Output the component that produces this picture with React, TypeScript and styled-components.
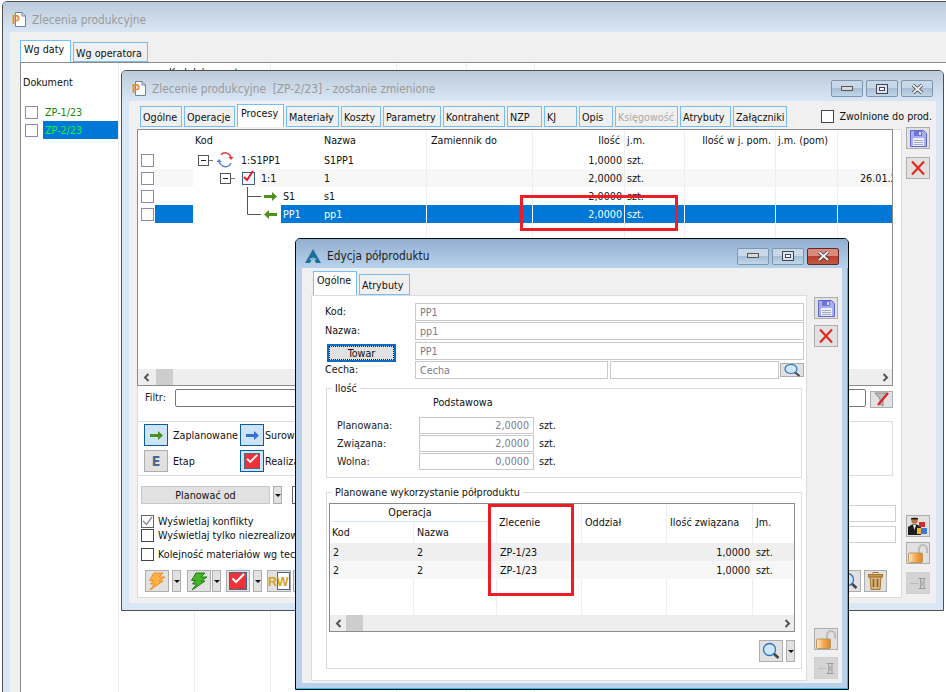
import React from "react";
import styled, { createGlobalStyle } from "styled-components";

const Global = createGlobalStyle`
  html, body { margin: 0; padding: 0; background: #fff; }
  #root { width: 946px; height: 692px; position: relative; overflow: hidden; background: #fff; }
  * { box-sizing: border-box; }
  body { font-family: "DejaVu Sans Condensed", "DejaVu Sans", sans-serif; font-size: 10.7px; color: #111; }
`;

const Desk = styled.div`position: relative; width: 946px; height: 692px; overflow: hidden;`;

const Win = styled.div<{ $x: number; $y: number; $w: number; $h: number; $active?: boolean }>`
  position: absolute;
  left: ${p => p.$x}px; top: ${p => p.$y}px; width: ${p => p.$w}px; height: ${p => p.$h}px;
  border: 1px solid ${p => (p.$active ? "#0a0a0a" : "#505050")};
  border-radius: 5px 5px 0 0;
  background: ${p => (p.$active ? "#b8d2ec" : "#d9e6f4")};
  display: flex; flex-direction: column;
  ${p => (p.$active ? "box-shadow: inset -1px -1px 0 #1cc4ec;" : "")}
`;
const TitleBar = styled.div<{ $h: number; $active?: boolean; $pad: number }>`
  height: ${p => p.$h}px; flex: none;
  display: flex; align-items: center; padding: 5px ${p => p.$pad}px 0 ${p => p.$pad}px;
  background: linear-gradient(${p => (p.$active ? "#93afd0, #b8d2ec" : "#bccbdb, #d9e6f4")});
  border-radius: 4px 4px 0 0;
`;
const TitleText = styled.span<{ $active?: boolean }>`
  font-size: 11.8px; margin-left: 6px; white-space: pre;
  color: ${p => (p.$active ? "#1c1c1c" : "#9a9a9a")};
`;
const Caption = styled.div`margin-left: auto; display: flex; gap: 3px;`;
const CapBtn = styled.div<{ $close?: boolean; $active?: boolean }>`
  width: 32px; height: 17px; border: 1px solid ${p => (p.$close ? "#5e2a2a" : "#7f97ae")}; border-radius: 2px;
  display: flex; align-items: center; justify-content: center;
  background: ${p => p.$close
    ? "linear-gradient(#d98a78 0 45%, #b9402a 50%, #c25a44)"
    : "linear-gradient(#c8d8e8 0 45%, #a6bfd8 50%, #c3d6e8)"};
`;
const Client = styled.div<{ $m: number }>`
  flex: 1; background: #f0f0f0; margin: 0 ${p => p.$m}px ${p => p.$m}px; min-height: 0;
  display: flex; flex-direction: column;
`;
const Tabs = styled.div<{ $left: number; $top: number; $h: number }>`
  display: flex; align-items: flex-end; gap: 2px; flex: none;
  padding: ${p => p.$top}px 4px 0 ${p => p.$left}px; height: ${p => p.$h + p.$top}px;
`;
const Tab = styled.div<{ $w: number; $active?: boolean; $off?: boolean; $h: number }>`
  width: ${p => p.$w}px; height: ${p => p.$h}px; flex: none;
  border: 1px solid #73bdfa; ${p => (p.$active ? "border-bottom: none;" : "")}
  background: ${p => (p.$active ? "#fff" : "#f0f0f0")};
  color: ${p => (p.$off ? "#a9a9a9" : "#111")};
  padding: ${p => (p.$active ? "2px 0 0 3px" : "4px 0 0 2px")}; white-space: nowrap; overflow: hidden;
  font-size: 10.7px;
`;
const ReleaseCheck = styled.label`
  margin-left: auto; display: flex; align-items: center; gap: 5px; height: 21px; font-size: 10.7px;
`;
const BigBox = styled.span<{ $tone?: string; $size?: number }>`
  width: ${p => p.$size ?? 13}px; height: ${p => p.$size ?? 13}px; flex: none; background: #fff;
  border: 1px solid ${p => p.$tone ?? "#444"}; display: inline-flex; align-items: center; justify-content: center;
`;

/* background window */
const BgPanel = styled.div`
  flex: 1; margin-left: 10px; border-left: 1px solid #8c8c8c; border-top: 1px solid #8c8c8c;
  background: #fff; display: flex; min-height: 0;
`;
const BgCol = styled.div<{ $w: number }>`
  width: ${p => p.$w}px; flex: none; border-right: 1px solid #ececec; white-space: nowrap;
`;
const BgHead = styled.div`padding: 13px 0 0 2px; height: 40px; font-size: 10.7px;`;
const BgClippedHead = styled.div`padding: 3px 0 0 50px; font-size: 10.7px;`;
const BgRow = styled.div`height: 18px; display: flex; align-items: center;`;
const BgDoc = styled.div<{ $sel?: boolean }>`
  flex: 1; height: 18px; margin-left: 5px; padding: 3px 0 0 2px; font-size: 10.7px;
  background: ${p => (p.$sel ? "#0078d7" : "transparent")};
  color: ${p => (p.$sel ? "#0cf53e" : "#0a8a0a")};
`;
const RowBox = styled.span<{ $ml?: number }>`
  width: 13px; height: 13px; flex: none; margin-left: ${p => p.$ml ?? 4}px; background: #fff; border: 1px solid #9088b2;
`;

/* production order window */
const Body = styled.div`display: flex; flex: 1; min-height: 0;`;
const Panel = styled.div<{ $w: number; $h: number; $top: number; $left: number }>`
  width: ${p => p.$w}px; height: ${p => p.$h}px; margin: ${p => p.$top}px 0 0 ${p => p.$left}px;
  background: #fff; border: 1px solid #dcdcdc; flex: none; display: flex; flex-direction: column;
`;
const Side = styled.div<{ $left: number; $top: number; $h: number }>`
  width: 24px; flex: none; margin: ${p => p.$top}px 0 0 ${p => p.$left}px; height: ${p => p.$h}px;
  display: flex; flex-direction: column; gap: 8px;
`;
const ToolBtn = styled.div<{ $push?: boolean; $gap?: number; $off?: boolean; $w?: number; $h?: number }>`
  width: ${p => p.$w ?? 24}px; height: ${p => p.$h ?? 22}px; flex: none;
  background: ${p => (p.$off ? "#d4d4d4" : "#e1e1e1")}; border: 1px solid ${p => (p.$off ? "#d0d0d0" : "#adadad")};
  display: flex; align-items: center; justify-content: center;
  ${p => (p.$push ? "margin-top: auto;" : "")}
  ${p => (p.$gap !== undefined ? `margin-top: ${p.$gap - 8}px;` : "")}
`;
const DropBtn = styled.div<{ $h?: number }>`
  width: 9px; height: ${p => p.$h ?? 22}px; flex: none; background: #e1e1e1; border: 1px solid #adadad;
  display: flex; align-items: center; justify-content: center;
  &::after { content: ""; border: 3px solid transparent; border-top: 3px solid #111; border-bottom: 0; }
`;

const GridWrap = styled.div`
  margin: -1px 0 0 -1px; width: 756px; height: 257px; flex: none; border: 1px solid #8c8c8c;
  display: flex; flex-direction: column; background: #fff;
`;
const COLS = "17px 38px 128px 106px 106px 92px 60px 91px 62px 1fr";
const GridHead = styled.div`
  display: grid; grid-template-columns: ${COLS}; height: 21px; flex: none;
`;
const HeadCell = styled.div<{ $right?: boolean; $line?: boolean; $pl?: number }>`
  padding: 4px 4px 0 ${p => p.$pl ?? 2}px; white-space: nowrap; overflow: hidden; font-size: 10.7px;
  text-align: ${p => (p.$right ? "right" : "left")};
  ${p => (p.$line ? "border-right: 1px solid #eee;" : "")}
`;
const GridRow = styled.div<{ $fill?: boolean }>`
  display: grid; grid-template-columns: ${COLS}; height: ${p => (p.$fill ? "auto" : "18px")};
  flex: ${p => (p.$fill ? "1" : "none")}; min-height: 0;
`;
type Tone = "" | "alt" | "sel";
const toneBg = (t?: Tone) => (t === "sel" ? "#0078d7" : t === "alt" ? "#f7f7f7" : "transparent");
const Cell = styled.div<{ $tone?: Tone; $right?: boolean; $line?: boolean; $pl?: number }>`
  background: ${p => toneBg(p.$tone)}; color: ${p => (p.$tone === "sel" ? "#fff" : "#111")};
  ${p => (p.$line ? `border-right: 1px solid ${p.$tone === "sel" ? "#fff" : "#eee"};` : "")}
  text-align: ${p => (p.$right ? "right" : "left")};
  padding: 3px ${p => (p.$right ? "2px" : "0")} 0 ${p => p.$pl ?? 2}px;
  white-space: nowrap; overflow: hidden; font-size: 10.7px;
`;
const CheckCell = styled.div`display: flex; align-items: center; padding-left: 3px;`;
const TreeCell = styled.div`display: flex; height: 18px;`;
const TreeLabel = styled.div<{ $tone?: Tone }>`
  flex: 1; background: ${p => toneBg(p.$tone)}; color: ${p => (p.$tone === "sel" ? "#fff" : "#111")};
  padding: 3px 0 0 2px; font-size: 10.7px; white-space: nowrap;
`;
const HScroll = styled.div`
  height: 16px; flex: none; background: #eee; display: flex; align-items: center; padding: 0 3px 0 5px;
`;
const Thumb = styled.div<{ $at: number }>`
  width: 17px; height: 100%; background: #cdcdcd; margin-left: ${p => p.$at}px;
`;
const Spring = styled.div`flex: 1;`;

const FilterRow = styled.div`
  display: flex; height: 19px; margin-top: 3px; width: 755px; flex: none; align-items: flex-start;
`;
const FilterLabel = styled.div`width: 37px; padding: 2px 0 0 7px; font-size: 10.7px; color: #222;`;
const FilterInput = styled.div`width: 691px; height: 18px; background: #fff; border: 1px solid #777; border-radius: 2px;`;
const FilterBtn = styled(ToolBtn)`margin: 2px 0 0 4px; height: 17px; width: 23px;`;
const LegendBox = styled.div`
  margin: 13px 0 0 -1px; width: 756px; height: 55px; flex: none; border: 1px solid #dcdcdc;
  display: grid; grid-template-columns: 96px 1fr; grid-auto-rows: 22px; row-gap: 4px;
  padding: 2px 0 0 6px;
`;
const LegendItem = styled.div`display: flex; align-items: center; white-space: nowrap; overflow: hidden; font-size: 10.7px;`;
const LegendKey = styled.div<{ $on?: boolean; $ml?: number }>`
  width: 24px; height: 22px; flex: none; margin-right: ${p => p.$ml ?? 5}px;
  background: ${p => (p.$on ? "#cce4f7" : "#e1e1e1")}; border: 1px solid ${p => (p.$on ? "#0a5a9c" : "#adadad")};
  display: flex; align-items: center; justify-content: center;
`;
const EGlyph = styled.span`font-weight: 700; font-size: 14px; color: #47688f;`;
const PlanRow = styled.div`display: flex; margin: 10px 0 0 3px; gap: 3px; height: 18px; flex: none;`;
const PlanBtn = styled.div`
  width: 129px; background: #e1e1e1; border: 1px solid #c8c8c8; text-align: center; padding-top: 2px; font-size: 10.7px;
`;
const PlanBox = styled.div`width: 20px; margin-left: 7px; border: 1px solid #666; background: #fff;`;
const MidBlock = styled.div`display: flex; height: 66px; flex: none; justify-content: space-between;`;
const Checks = styled.div`padding: 10px 0 0 3px; display: flex; flex-direction: column;`;
const CheckLine = styled.div<{ $mt?: number }>`
  display: flex; align-items: center; gap: 4px; height: 14px; white-space: nowrap; font-size: 10.7px;
  margin-top: ${p => p.$mt ?? 0}px;
`;
const RightInputs = styled.div`
  width: 90px; padding: 1px 5px 0 0; display: flex; flex-direction: column; gap: 4px;
`;
const RightInput = styled.div`height: 17px; border: 1px solid #cfcfcf; background: #fff;`;
const ActionRow = styled.div`display: flex; padding: 0 7px 0 7px; height: 23px; flex: none; width: 756px;`;
const BtnPair = styled.div<{ $gap?: number; $next?: number }>`
  display: flex; gap: ${p => p.$gap ?? 3}px; margin-right: ${p => p.$next ?? 6}px;
`;
const PushRight = styled.div`margin-left: auto; display: flex; gap: 3px;`;

/* half-product window */
const EditPanel = styled(Panel)`display: block;`;
const FormRow = styled.div<{ $mt?: number; $pl?: number }>`
  display: flex; height: 18px; padding-left: ${p => p.$pl ?? 13}px; margin-top: ${p => p.$mt ?? 0}px; align-items: center;
`;
const FormLabel = styled.div`width: 90px; flex: none; padding-bottom: 2px; font-size: 10.7px;`;
const Field = styled.div<{ $w?: number; $right?: boolean; $ml?: number }>`
  ${p => (p.$w ? `width: ${p.$w}px; flex: none;` : "flex: 1;")}
  height: 18px; background: #fff; border: 1px solid #c8c8c8; color: #7c7c8a; font-size: 10.7px;
  padding: 2px ${p => (p.$right ? "4px" : "0")} 0 4px; text-align: ${p => (p.$right ? "right" : "left")};
  white-space: nowrap; overflow: hidden; margin-left: ${p => p.$ml ?? 0}px;
`;
const FormFields = styled.div`padding: 7px 2px 0 0;`;
const TowarBtn = styled.button`
  width: 69px; height: 18px; margin: 4px 19px 0 0; padding: 0; flex: none; font: inherit; font-size: 10.7px; color: #111;
  background: #e1e1e1; border: 2px solid #0a6cc4; outline: 1px dotted #222; outline-offset: -3px;
`;
const SearchBtn = styled(ToolBtn)`width: 24px; height: 14px; margin-left: 1px;`;
const Group = styled.div<{ $mt: number; $h: number }>`
  position: relative; margin: ${p => p.$mt}px 4px 0 14px; height: ${p => p.$h}px; border: 1px solid #dcdcdc;
`;
const GroupTitle = styled.span`
  position: absolute; left: 5px; top: -7px; padding: 0 3px; background: #fff; font-size: 10.7px; line-height: 14px; white-space: nowrap;
`;
const QtyHead = styled.div`padding: 7px 0 0 106px; height: 28px; font-size: 10.7px;`;
const QtyRow = styled.div`display: flex; align-items: center; height: 17px; margin-bottom: 1px; padding-left: 10px; font-size: 10.7px;`;
const QtyLabel = styled.div`width: 82px; flex: none; color: #222;`;
const QtyField = styled(Field)`height: 17px; padding-top: 1px;`;
const Unit = styled.div`margin-left: 5px;`;

const PlanTable = styled.div`
  margin: 10px 0 0 2px; width: 466px; height: 129px; border: 1px solid #8c8c8c; display: flex; flex-direction: column;
`;
const PCOLS = "84px 83px 85px 85px 86px 1fr";
const PHead = styled.div`
  display: grid; grid-template-columns: ${PCOLS}; grid-template-rows: 18px 21px; height: 39px; flex: none;
`;
const PGroupHead = styled.div`
  grid-column: 1 / span 2; grid-row: 1; text-align: center; border-bottom: 1px solid #d5e7f6; margin: 0 8px 0 1px; padding-top: 2px; font-size: 10.7px;
`;
const PHeadCell = styled.div<{ $tall?: boolean; $line?: boolean; $pl?: number; $col: number }>`
  grid-column: ${p => p.$col};
  ${p => (p.$tall ? "grid-row: 1 / span 2; padding-top: 12px;" : "grid-row: 2; padding-top: 4px;")}
  padding-left: ${p => p.$pl ?? 2}px; font-size: 10.7px; white-space: nowrap; overflow: hidden;
  ${p => (p.$line ? "border-right: 1px solid #eee;" : "")}
`;
const PRow = styled.div<{ $bg?: string; $fill?: boolean }>`
  display: grid; grid-template-columns: ${PCOLS}; height: ${p => (p.$fill ? "auto" : "18px")};
  flex: ${p => (p.$fill ? "1" : "none")}; min-height: 0; background: ${p => p.$bg ?? "transparent"};
`;
const PCell = styled.div<{ $right?: boolean; $line?: boolean; $pl?: number }>`
  padding: 3px ${p => (p.$right ? "3px" : "0")} 0 ${p => p.$pl ?? 3}px; font-size: 10.7px;
  text-align: ${p => (p.$right ? "right" : "left")};
  ${p => (p.$line ? "border-right: 1px solid #eee;" : "")}
`;
const PToolbar = styled.div`
  display: flex; justify-content: flex-end; gap: 3px; width: 466px; margin: 8px 0 0 2px;
`;
const RedFrame = styled.div<{ $x: number; $y: number; $w: number; $h: number }>`
  position: absolute; left: ${p => p.$x}px; top: ${p => p.$y}px; width: ${p => p.$w}px; height: ${p => p.$h}px;
  border: 3px solid #ee1c25; pointer-events: none;
`;

/* icons */
const DocP = () => (
  <svg width="14" height="15" viewBox="0 0 14 15">
    <path d="M3.5.5H10l3.5 3.5v10.5h-10z" fill="#fff" stroke="#6f8299" />
    <path d="M10 .5V4h3.5" fill="none" stroke="#6f8299" />
    <text x="0" y="12" fontFamily="Liberation Sans" fontWeight="700" fontSize="12" fill="#f08a24">P</text>
  </svg>
);
const PeakLogo = () => (
  <svg width="16" height="14" viewBox="0 0 16 14">
    <path d="M8 0 16 14H11L8 8 5 14H0z" fill="#1f6f9c" />
    <path d="M5.5 9h5l1 2h-7z" fill="#7fb6d6" />
  </svg>
);
const CapMin = () => <svg width="12" height="6" viewBox="0 0 12 6"><rect x=".5" y=".5" width="11" height="4" fill="#d9d9d9" stroke="#555" /></svg>;
const CapMax = () => <svg width="12" height="10" viewBox="0 0 12 10"><rect x=".5" y=".5" width="11" height="9" fill="#d9e4ee" stroke="#445" /><rect x="3.5" y="3.5" width="5" height="3" fill="#fff" stroke="#445" /></svg>;
const CapX = () => (
  <svg width="13" height="10" viewBox="0 0 13 10">
    <path d="M2 1l9 8M11 1l-9 8" stroke="#333" strokeWidth="3.4" />
    <path d="M2 1l9 8M11 1l-9 8" stroke="#eef2f6" strokeWidth="2" />
  </svg>
);
const Expander = ({ x }: { x: number }) => (
  <g>
    <rect x={x + 0.5} y="4.5" width="10" height="10" fill="#fff" stroke="#555" />
    <path d={`M${x + 3} 9.5h5`} stroke="#222" />
    <path d={`M${x + 11} 9.5h4`} stroke="#777" />
  </g>
);
const TreeRoot = () => (
  <svg width="46" height="18" viewBox="0 0 46 18">
    <Expander x={5} />
    <path d="M28 3.8A5.8 5.8 0 0 1 38 6.5" fill="none" stroke="#e43a3a" strokeWidth="1.4" />
    <path d="M35.5 6h5l-2.5 3z" fill="#e43a3a" />
    <path d="M38 12A5.8 5.8 0 0 1 28.5 14" fill="none" stroke="#4d80d8" strokeWidth="1.4" />
    <path d="M26 10A5.8 5.8 0 0 0 28.5 14" fill="none" stroke="#4d80d8" strokeWidth="1.4" />
    <path d="M23.5 11h5l-2.5-3z" fill="#4d80d8" />
  </svg>
);
const TreeOp = () => (
  <svg width="66" height="18" viewBox="0 0 66 18">
    <Expander x={27} />
    <rect x="49.5" y="3.5" width="12" height="12" fill="#f4f7fb" stroke="#40607f" />
    <path d="M51 8l3 3 6-9" fill="none" stroke="#e01f26" strokeWidth="2" />
  </svg>
);
const SmallArrow = ({ left, color = "#4f8f1e" }: { left?: boolean; color?: string }) => (
  <svg width="13" height="9" viewBox="0 0 13 9">
    <path d={left ? "M0 4.5 5 0v3h8v3H5v3z" : "M13 4.5 8 0v3H0v3h8v3z"} fill={color} />
  </svg>
);
const TreeLeaf = ({ last, left }: { last?: boolean; left?: boolean }) => (
  <svg width="88" height="18" viewBox="0 0 88 18">
    <path d={last ? "M54.5 0v9.5H68" : "M54.5 0v18M54.5 9.5H68"} fill="none" stroke="#555" />
    <path d={left ? "M71 9.5 76 5v3h8v3h-8v3z" : "M84 9.5 79 5v3h-8v3h8v3z"} fill="#4f8f1e" />
  </svg>
);
const Floppy = () => (
  <svg width="17" height="17" viewBox="0 0 17 17">
    <path d="M.5.5h13l3 3v13H.5z" fill="#a9aef0" stroke="#6065c8" />
    <rect x="4" y="1" width="8" height="5" fill="#6d75d6" />
    <rect x="9" y="2" width="2" height="3" fill="#dfe1fb" />
    <rect x="3" y="8" width="11" height="8" fill="#eef0f7" />
    <path d="M4 10.5h9M4 12.5h9M4 14.5h9" stroke="#a6a9c6" />
  </svg>
);
const RedX = () => (
  <svg width="16" height="16" viewBox="0 0 16 16">
    <path d="M2 1.5l12 13M14 1.5l-12 13" stroke="#e8281e" strokeWidth="2.2" fill="none" />
  </svg>
);
const FilterOff = () => (
  <svg width="16" height="15" viewBox="0 0 16 15">
    <path d="M1 1h12L9 7v7L6 12V7z" fill="#bdbdbd" stroke="#8a8a8a" />
    <path d="M14 1 4 13" stroke="#e0202a" strokeWidth="2.2" />
  </svg>
);
const Search = ({ size = 18 }: { size?: number }) => (
  <svg width={size} height={size} viewBox="0 0 18 18">
    <path d="M11 11l5.5 5" stroke="#444" strokeWidth="2.6" />
    <circle cx="7.5" cy="7.5" r="6" fill="#cfe6fa" stroke="#2f75b8" strokeWidth="1.3" />
  </svg>
);
const SearchWide = () => (
  <svg width="17" height="13" viewBox="0 0 17 13">
    <path d="M10.5 8l5 4" stroke="#444" strokeWidth="2" />
    <ellipse cx="7" cy="5" rx="6" ry="4.5" fill="#cfe6fa" stroke="#2f75b8" strokeWidth="1.2" />
  </svg>
);
const Trash = () => (
  <svg width="15" height="18" viewBox="0 0 15 18">
    <rect x="5" y=".5" width="5" height="2" fill="none" stroke="#a9742c" />
    <rect x=".5" y="2.5" width="14" height="2.5" fill="#c49a5a" stroke="#a9742c" />
    <path d="M2 5h11l-1 12.5H3z" fill="#d8b57e" stroke="#a9742c" />
    <path d="M5.5 7v8M9.5 7v8" stroke="#8d6020" strokeWidth="1.6" />
  </svg>
);
const Lock = () => (
  <svg width="21" height="19" viewBox="0 0 21 19">
    <defs>
      <linearGradient id="lk" x1="0" x2="1" y1="0" y2="0">
        <stop offset="0" stopColor="#fbe8c8" /><stop offset=".55" stopColor="#f3a64d" /><stop offset="1" stopColor="#d98626" />
      </linearGradient>
    </defs>
    <path d="M11 9V5a4 4 0 0 1 8 0v4" fill="none" stroke="#bcbcbc" strokeWidth="2" />
    <rect x=".5" y="9" width="14" height="9.5" rx="1" fill="url(#lk)" stroke="#b9975f" />
  </svg>
);
const Pin = () => (
  <svg width="17" height="13" viewBox="0 0 17 13">
    <path d="M0 6.5h8" stroke="#bbb" />
    <path d="M8.5 1.5h7M8.5 11.5h7M10.5 1.5v10M14 1.5v10" stroke="#9a9a9a" />
    <path d="M10.5 4h3.5v5h-3.5z" fill="#b5b5b5" />
  </svg>
);
const Person = () => (
  <svg width="20" height="19" viewBox="0 0 20 19">
    <circle cx="6.5" cy="3.5" r="3.2" fill="#b5763c" />
    <path d="M3 2.5h7V1H3z" fill="#2a1c10" />
    <path d="M0 18V10l4-2.5h5L13 10v8z" fill="#1d1d1f" />
    <path d="M5 8l1.5 5L8 8z" fill="#eee" />
    <path d="M11 5h6v5h-6z" fill="#d62a2a" />
    <path d="M13 11h6v6h-6z" fill="#3d7ad6" />
    <path d="M9 11h4v6H9z" fill="#f0b529" />
  </svg>
);
const Bolt = ({ fill, edge }: { fill: string; edge: string }) => (
  <svg width="20" height="19" viewBox="0 0 20 19">
    <path d="M7 1h9l-4 4h6l-6 4h4L3 18l4.5-6H3.5l3-3.5H2.5z" fill={fill} stroke={edge} strokeLinejoin="round" />
  </svg>
);
const RedCheckBox = ({ size = 18 }: { size?: number }) => (
  <svg width={size} height={size} viewBox="0 0 18 18">
    <rect x=".5" y=".5" width="17" height="17" fill="#ee3338" stroke="#47668c" />
    <path d="M3.5 6.5l3.5 3.5L15 2" fill="none" stroke="#fff" strokeWidth="2" />
  </svg>
);
const RwIcon = () => (
  <svg width="22" height="18" viewBox="0 0 22 18">
    <rect x="9.5" y=".5" width="12" height="17" fill="#fff" stroke="#49688e" />
    <text x="0" y="14" fontFamily="Liberation Sans" fontWeight="700" fontSize="12.5" fill="#d8a21c">RW</text>
  </svg>
);
const ChevL = () => <svg width="7" height="9" viewBox="0 0 7 9"><path d="M5.5 1 2 4.5 5.5 8" fill="none" stroke="#555" strokeWidth="2" /></svg>;
const ChevR = () => <svg width="7" height="9" viewBox="0 0 7 9"><path d="M1.5 1 5 4.5 1.5 8" fill="none" stroke="#555" strokeWidth="2" /></svg>;
const GrayTick = () => <svg width="11" height="10" viewBox="0 0 11 10"><path d="M1 5l3.5 3.5L10 1" fill="none" stroke="#888" strokeWidth="1.3" /></svg>;

const wideTabs: [string, number, boolean?, boolean?][] = [
  ["Ogólne", 42], ["Operacje", 51], ["Procesy", 47, true], ["Materiały", 53], ["Koszty", 40], ["Parametry", 58],
  ["Kontrahent", 62], ["NZP", 35], ["KJ", 33], ["Opis", 34], ["Księgowość", 63, false, true], ["Atrybuty", 51], ["Załączniki", 54],
];

const Caps = () => (
  <Caption>
    <CapBtn><CapMin /></CapBtn>
    <CapBtn><CapMax /></CapBtn>
    <CapBtn><CapX /></CapBtn>
  </Caption>
);

type GridData = { tone: Tone; tree: React.ReactNode; kod: string; nazwa: string; ilosc: string; date?: string };
const gridRows: GridData[] = [
  { tone: "", tree: <TreeRoot />, kod: "1:S1PP1", nazwa: "S1PP1", ilosc: "1,0000" },
  { tone: "alt", tree: <TreeOp />, kod: "1:1", nazwa: "1", ilosc: "2,0000", date: "26.01.2023" },
  { tone: "", tree: <TreeLeaf />, kod: "S1", nazwa: "s1", ilosc: "2,0000" },
  { tone: "sel", tree: <TreeLeaf last left />, kod: "PP1", nazwa: "pp1", ilosc: "2,0000" },
];

export default function App() {
  return (
    <Desk>
      <Global />
      <Win $x={2} $y={1} $w={960} $h={720}>
        <TitleBar $h={30} $pad={9}><DocP /><TitleText>Zlecenia produkcyjne</TitleText></TitleBar>
        <Client $m={7}>
          <Tabs $left={10} $top={8} $h={22}>
            <Tab $w={51} $h={22} $active>Wg daty</Tab>
            <Tab $w={75} $h={20}>Wg operatora</Tab>
          </Tabs>
          <BgPanel>
            <BgCol $w={98}>
              <BgHead>Dokument</BgHead>
              <BgRow><RowBox /><BgDoc>ZP-1/23</BgDoc></BgRow>
              <BgRow><RowBox /><BgDoc $sel>ZP-2/23</BgDoc></BgRow>
            </BgCol>
            <BgCol $w={76}><BgClippedHead>Kod dokumentu</BgClippedHead></BgCol>
            <BgCol $w={76} />
            <BgCol $w={126} />
            <BgCol $w={70} />
            <BgCol $w={68} />
          </BgPanel>
        </Client>
      </Win>

      <Win $x={121} $y={70} $w={823} $h={541}>
        <TitleBar $h={30} $pad={10}>
          <DocP /><TitleText>{"Zlecenie produkcyjne  [ZP-2/23] - zostanie zmienione"}</TitleText>
          <Caps />
        </TitleBar>
        <Client $m={7}>
          <Tabs $left={11} $top={3} $h={23}>
            {wideTabs.map(([t, w, a, o]) => (
              <Tab key={t} $w={w} $h={a ? 23 : 21} $active={a} $off={o}>{t}</Tab>
            ))}
            <ReleaseCheck><BigBox />Zwolnione do prod.</ReleaseCheck>
          </Tabs>
          <Body>
            <Panel $w={765} $h={469} $top={2} $left={8}>
              <GridWrap>
                <GridHead>
                  <HeadCell /><HeadCell />
                  <HeadCell>Kod</HeadCell>
                  <HeadCell $line $pl={3}>Nazwa</HeadCell>
                  <HeadCell $line $pl={4}>Zamiennik do</HeadCell>
                  <HeadCell $right $line>Ilość</HeadCell>
                  <HeadCell $line>j.m.</HeadCell>
                  <HeadCell $right $line>Ilość w j. pom.</HeadCell>
                  <HeadCell $line>j.m. (pom)</HeadCell>
                  <HeadCell />
                </GridHead>
                {gridRows.map(r => (
                  <GridRow key={r.kod}>
                    <CheckCell><RowBox $ml={0} /></CheckCell>
                    <Cell $tone={r.tone} />
                    <TreeCell>{r.tree}<TreeLabel $tone={r.tone}>{r.kod}</TreeLabel></TreeCell>
                    <Cell $tone={r.tone} $line $pl={3}>{r.nazwa}</Cell>
                    <Cell $tone={r.tone} $line />
                    <Cell $tone={r.tone} $line $right>{r.ilosc}</Cell>
                    <Cell $tone={r.tone} $line>{"szt."}</Cell>
                    <Cell $tone={r.tone} $line />
                    <Cell $tone={r.tone} $line />
                    <Cell $tone={r.tone} $pl={22}>{r.date}</Cell>
                  </GridRow>
                ))}
                <GridRow $fill>
                  <Cell /><Cell /><Cell />
                  <Cell $line /><Cell $line /><Cell $line /><Cell $line /><Cell $line /><Cell $line /><Cell />
                </GridRow>
                <HScroll>
                  <ChevL /><Thumb $at={6} /><Spring /><ChevR />
                </HScroll>
              </GridWrap>
              <FilterRow>
                <FilterLabel>Filtr:</FilterLabel>
                <FilterInput />
                <FilterBtn><FilterOff /></FilterBtn>
              </FilterRow>
              <LegendBox>
                <LegendItem><LegendKey $on><SmallArrow /></LegendKey>Zaplanowane</LegendItem>
                <LegendItem><LegendKey $on $ml={1}><SmallArrow color="#3a6fd0" /></LegendKey>Surowce</LegendItem>
                <LegendItem><LegendKey><EGlyph>E</EGlyph></LegendKey>Etap</LegendItem>
                <LegendItem><LegendKey $on $ml={1}><RedCheckBox size={16} /></LegendKey>Realizacje</LegendItem>
              </LegendBox>
              <PlanRow>
                <PlanBtn>Planować od</PlanBtn>
                <DropBtn $h={18} />
                <PlanBox />
              </PlanRow>
              <MidBlock>
                <Checks>
                  <CheckLine><BigBox $tone="#666"><GrayTick /></BigBox>Wyświetlaj konflikty</CheckLine>
                  <CheckLine><BigBox />Wyświetlaj tylko niezrealizowane</CheckLine>
                  <CheckLine $mt={5}><BigBox />Kolejność materiałów wg technologii</CheckLine>
                </Checks>
                <RightInputs><RightInput /><RightInput /></RightInputs>
              </MidBlock>
              <ActionRow>
                <BtnPair $next={6}><ToolBtn><Bolt fill="#ffb347" edge="#f08a1c" /></ToolBtn><DropBtn /></BtnPair>
                <BtnPair $gap={1} $next={5}><ToolBtn><Bolt fill="#46b52a" edge="#1f7a12" /></ToolBtn><DropBtn /></BtnPair>
                <BtnPair $next={5}><ToolBtn><RedCheckBox /></ToolBtn><DropBtn /></BtnPair>
                <BtnPair $gap={2}><ToolBtn><RwIcon /></ToolBtn><DropBtn /></BtnPair>
                <PushRight>
                  <ToolBtn><Search /></ToolBtn>
                  <ToolBtn $w={23}><Trash /></ToolBtn>
                </PushRight>
              </ActionRow>
            </Panel>
            <Side $left={4} $top={0} $h={467}>
              <ToolBtn><Floppy /></ToolBtn>
              <ToolBtn><RedX /></ToolBtn>
              <ToolBtn $push><Person /></ToolBtn>
              <ToolBtn $gap={5}><Lock /></ToolBtn>
              <ToolBtn $off><Pin /></ToolBtn>
            </Side>
          </Body>
        </Client>
      </Win>

      <Win $x={295} $y={238} $w={554} $h={452} $active>
        <TitleBar $h={29} $pad={9} $active>
          <PeakLogo /><TitleText $active>Edycja półproduktu</TitleText>
          <Caption>
            <CapBtn><CapMin /></CapBtn>
            <CapBtn><CapMax /></CapBtn>
            <CapBtn $close><CapX /></CapBtn>
          </Caption>
        </TitleBar>
        <Client $m={6}>
          <Tabs $left={11} $top={3} $h={24}>
            <Tab $w={44} $h={24} $active>Ogólne</Tab>
            <Tab $w={51} $h={21}>Atrybuty</Tab>
          </Tabs>
          <Body>
            <EditPanel $w={496} $h={386} $top={0} $left={9}>
              <FormFields>
                <FormRow><FormLabel>Kod:</FormLabel><Field>PP1</Field></FormRow>
                <FormRow $mt={1}><FormLabel>Nazwa:</FormLabel><Field>pp1</Field></FormRow>
                <FormRow $mt={2} $pl={15}><TowarBtn>Towar</TowarBtn><Field>PP1</Field></FormRow>
                <FormRow $mt={1}>
                  <FormLabel>Cecha:</FormLabel>
                  <Field $w={193}>Cecha</Field>
                  <Field $w={169} $ml={2} />
                  <SearchBtn><SearchWide /></SearchBtn>
                </FormRow>
              </FormFields>
              <Group $mt={9} $h={90}>
                <GroupTitle>Ilość</GroupTitle>
                <QtyHead>Podstawowa</QtyHead>
                <QtyRow><QtyLabel>Planowana:</QtyLabel><QtyField $w={115} $right>2,0000</QtyField><Unit>szt.</Unit></QtyRow>
                <QtyRow><QtyLabel>Związana:</QtyLabel><QtyField $w={115} $right>2,0000</QtyField><Unit>szt.</Unit></QtyRow>
                <QtyRow><QtyLabel>Wolna:</QtyLabel><QtyField $w={115} $right>0,0000</QtyField><Unit>szt.</Unit></QtyRow>
              </Group>
              <Group $mt={14} $h={177}>
                <GroupTitle>Planowane wykorzystanie półproduktu</GroupTitle>
                <PlanTable>
                  <PHead>
                    <PGroupHead>Operacja</PGroupHead>
                    <PHeadCell $col={3} $tall $line $pl={2}>Zlecenie</PHeadCell>
                    <PHeadCell $col={4} $tall $line $pl={3}>Oddział</PHeadCell>
                    <PHeadCell $col={5} $tall $line $pl={3}>Ilość związana</PHeadCell>
                    <PHeadCell $col={6} $tall $pl={3}>Jm.</PHeadCell>
                    <PHeadCell $col={1} $line>Kod</PHeadCell>
                    <PHeadCell $col={2} $line $pl={3}>Nazwa</PHeadCell>
                  </PHead>
                  {["#efefef", "#f7f7f7"].map(bg => (
                    <PRow key={bg} $bg={bg}>
                      <PCell $pl={3}>2</PCell>
                      <PCell>2</PCell>
                      <PCell>ZP-1/23</PCell>
                      <PCell />
                      <PCell $right>1,0000</PCell>
                      <PCell>szt.</PCell>
                    </PRow>
                  ))}
                  <PRow $fill>
                    <PCell $line /><PCell $line /><PCell $line /><PCell $line /><PCell $line /><PCell />
                  </PRow>
                  <HScroll>
                    <ChevL /><Thumb $at={4} /><Spring /><ChevR />
                  </HScroll>
                </PlanTable>
                <PToolbar>
                  <ToolBtn><Search /></ToolBtn>
                  <DropBtn />
                </PToolbar>
              </Group>
            </EditPanel>
            <Side $left={7} $top={2} $h={382}>
              <ToolBtn><Floppy /></ToolBtn>
              <ToolBtn $gap={6}><RedX /></ToolBtn>
              <ToolBtn $push><Lock /></ToolBtn>
              <ToolBtn $off $gap={7}><Pin /></ToolBtn>
            </Side>
          </Body>
        </Client>
      </Win>

      <RedFrame $x={520} $y={195} $w={158} $h={36} />
      <RedFrame $x={488} $y={504} $w={86} $h={92} />
    </Desk>
  );
}
